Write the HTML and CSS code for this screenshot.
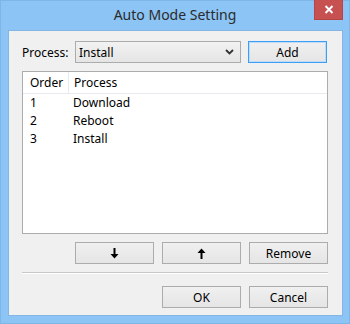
FILE: index.html
```html
<!DOCTYPE html>
<html>
<head>
<meta charset="utf-8">
<link rel="stylesheet" href="styles.css">
</head>
<body>
<div class="window">
  <div class="titlebar">
    <div class="title">Auto Mode Setting</div>
    <div class="close">
      <svg width="10" height="9" viewBox="0 0 10 9"><path d="M1.5 1 L8.5 8 M8.5 1 L1.5 8" stroke="#fff" stroke-width="2"/></svg>
    </div>
  </div>
  <div class="client">
    <div class="toprow">
      <span class="label">Process:</span>
      <div class="combo">
        <span class="combo-text">Install</span>
        <svg class="chev" width="9" height="6" viewBox="0 0 9 6"><path d="M1 1 L4.5 4.5 L8 1" stroke="#333" stroke-width="1.8" fill="none"/></svg>
      </div>
      <button class="btn default">Add</button>
    </div>
    <div class="list">
      <div class="head">
        <div class="c1">Order</div>
        <div class="c2">Process</div>
      </div>
      <div class="row"><div class="c1">1</div><div class="c2">Download</div></div>
      <div class="row"><div class="c1">2</div><div class="c2">Reboot</div></div>
      <div class="row"><div class="c1">3</div><div class="c2">Install</div></div>
    </div>
    <div class="btnrow">
      <button class="btn"><svg width="9" height="11" viewBox="0 0 9 11"><path d="M4.5 0 V7" stroke="#000" stroke-width="2"/><path d="M0.5 6 H8.5 L4.5 10.5 Z" fill="#000"/></svg></button>
      <button class="btn"><svg width="9" height="11" viewBox="0 0 9 11"><path d="M4.5 11 V4" stroke="#000" stroke-width="2"/><path d="M0.5 5 H8.5 L4.5 0.5 Z" fill="#000"/></svg></button>
      <button class="btn">Remove</button>
    </div>
    <div class="sep"></div>
    <div class="btnrow okrow">
      <button class="btn">OK</button>
      <button class="btn">Cancel</button>
    </div>
  </div>
</div>
</body>
</html>
```
FILE: styles.css
```css
html, body {
  margin: 0;
  padding: 0;
}
body {
  width: 350px;
  height: 324px;
  overflow: hidden;
  font-family: "Noto Sans", "Open Sans", sans-serif;
  font-size: 12px;
  color: #000;
}
.window {
  width: 350px;
  height: 324px;
  box-sizing: border-box;
  background: #8cc4f5;
  border: 1px solid #7fb6e8;
  display: flex;
  flex-direction: column;
}
.titlebar {
  height: 29px;
  position: relative;
  display: flex;
  justify-content: center;
  align-items: center;
}
.title {
  font-size: 14px;
  color: #2b2b2b;
  margin-top: -2px;
}
.close {
  position: absolute;
  right: 6px;
  top: -1px;
  width: 29px;
  height: 20px;
  background: #c75050;
  box-sizing: border-box;
  border: 1px solid #b64545;
  border-top: none;
  display: flex;
  align-items: center;
  justify-content: center;
}
.client {
  margin: 0 6px 7px 7px;
  flex: 1;
  background: #f0f0f0;
  border: 1px solid #84b6e4;
  padding: 10px 13px 0 13px;
  display: flex;
  flex-direction: column;
}
.toprow {
  display: flex;
  align-items: center;
  height: 22px;
}
.label {
  width: 53px;
  font-size: 12px;
}
.combo {
  width: 166px;
  height: 22px;
  box-sizing: border-box;
  border: 1px solid #acacac;
  background: linear-gradient(#f2f2f2, #e5e5e5);
  display: flex;
  align-items: center;
  padding: 0 6px 0 3px;
}
.combo-text {
  flex: 1;
}
.chev {
  display: block;
}
.btn {
  width: 79px;
  height: 22px;
  box-sizing: border-box;
  border: 1px solid #acacac;
  background: linear-gradient(#f0f0f0, #e5e5e5);
  font-family: "Noto Sans", "Open Sans", sans-serif;
  font-size: 12px;
  color: #000;
  padding: 0;
  display: flex;
  align-items: center;
  justify-content: center;
}
.toprow .btn {
  margin-left: 7px;
}
.btn.default {
  border-color: #3c9ef5;
  box-shadow: inset 0 0 0 1px #bedcf6;
}
.list {
  margin-top: 8px;
  width: 306px;
  height: 163px;
  box-sizing: border-box;
  border: 1px solid #acacac;
  background: #fff;
}
.head {
  display: flex;
  height: 21px;
  border-bottom: 1px solid #e6ebf1;
  align-items: center;
}
.head .c1 {
  border-right: 1px solid #e6ebf1;
  align-self: stretch;
  display: flex;
  align-items: center;
}
.c1 {
  width: 38px;
  padding-left: 7px;
}
.c2 {
  padding-left: 5px;
}
.row {
  display: flex;
  height: 17px;
  padding-bottom: 1px;
  align-items: center;
}
.btnrow {
  display: flex;
  justify-content: flex-end;
  gap: 8px;
  margin-top: 8px;
  width: 306px;
}
.btnrow .btn svg {
  display: block;
}
.sep {
  margin-top: 8px;
  width: 306px;
  height: 1px;
  background: #c8c8c8;
  border-bottom: 1px solid #fff;
}
.okrow {
  margin-top: 12px;
}
```
